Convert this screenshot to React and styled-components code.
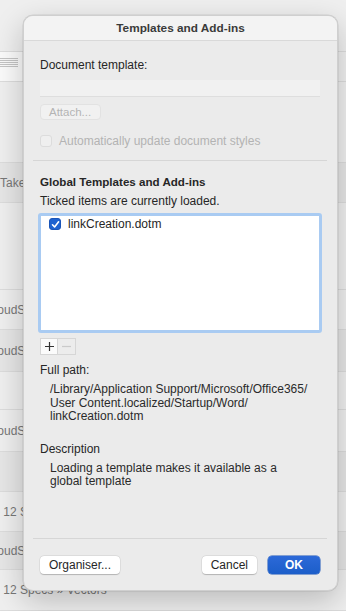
import React from 'react';
import styled, { createGlobalStyle } from 'styled-components';

const GlobalStyle = createGlobalStyle`
  html, body {
    margin: 0;
    padding: 0;
    background: #e8e8e8;
    font-family: "Liberation Sans", "Inter", sans-serif;
  }
`;

const Screen = styled.div`
  position: relative;
  width: 346px;
  height: 611px;
  overflow: hidden;
  background: #e9e9e9;
`;

// the app window behind the sheet
const BackList = styled.div`
  display: flex;
  flex-direction: column;
  width: 100%;
  height: 100%;
  background: #efefef;
`;

const BackRow = styled.div`
  display: flex;
  align-items: center;
  height: ${(p) => p.h}px;
  flex: none;
  box-sizing: border-box;
  border-bottom: 1px solid #dcdcdc;
  font-size: 12px;
  color: #777;
  white-space: nowrap;
  text-indent: ${(p) => p.indent || 0}px;
  background: ${(p) => (p.shade ? '#e6e6e6' : 'transparent')};
`;

const Thumb = styled.div`
  display: flex;
  flex-direction: column;
  gap: 1px;
  padding: 6px 4px 0 0;
  width: 22px;
  height: 100%;
  box-sizing: border-box;
  background: #fafafa;

  span {
    display: block;
    height: 1px;
    background: #c4c4c4;
  }
`;

const Dialog = styled.div`
  position: absolute;
  left: 23px;
  top: 15px;
  width: 315px;
  height: 576px;
  box-sizing: border-box;
  display: flex;
  flex-direction: column;
  background: #ebebeb;
  border: 1px solid #cfcfcf;
  border-radius: 10px;
  box-shadow: 0 10px 30px rgba(0, 0, 0, 0.22), 0 0 0 0.5px rgba(0, 0, 0, 0.1);
  overflow: hidden;
`;

const TitleBar = styled.div`
  height: 24px;
  flex: none;
  display: flex;
  align-items: center;
  justify-content: center;
  background: #f3f3f3;
  border-bottom: 1px solid #d9d9d9;
  font-size: 11.8px;
  font-weight: 700;
  color: #3a3a3a;
`;

const Body = styled.div`
  flex: 1;
  display: flex;
  flex-direction: column;
  padding: 0 17px 0 16px;
  color: #262626;
  font-size: 12px;
  white-space: nowrap;
`;

const Label = styled.div`
  line-height: 15px;
  margin-top: ${(p) => p.mt || 0}px;
  font-weight: ${(p) => (p.bold ? 700 : 400)};
  font-size: ${(p) => (p.bold ? 11.6 : 12)}px;
`;

const TextField = styled.div`
  margin-top: 7px;
  height: 16px;
  background: #f1f1f1;
  border-bottom: 1px solid #dedede;
`;

const SmallButton = styled.div`
  margin-top: 7px;
  width: 61px;
  height: 16px;
  box-sizing: border-box;
  display: flex;
  align-items: center;
  padding-left: 8px;
  border-radius: 4px;
  background: #f1f1f1;
  border: 1px solid #e2e2e2;
  color: #b4b4b4;
  font-size: 11.5px;
`;

const CheckRow = styled.div`
  margin-top: ${(p) => (p.flush ? 0 : 14)}px;
  display: flex;
  align-items: center;
  gap: 7px;
  color: ${(p) => (p.disabled ? '#b3b3b3' : '#262626')};
  line-height: 14px;
`;

const Box = styled.span`
  width: 12px;
  height: 12px;
  box-sizing: border-box;
  border-radius: 3px;
  flex: none;
  display: flex;
  align-items: center;
  justify-content: center;
  background: ${(p) => (p.checked ? '#1e62d0' : '#efefef')};
  border: 1px solid ${(p) => (p.checked ? '#1a55b8' : '#dcdcdc')};
`;

const Separator = styled.div`
  height: 1px;
  background: #d6d6d6;
  margin: ${(p) => p.m};
`;

const ListBox = styled.div`
  margin: 4px -2px 0 -2px;
  height: 120px;
  box-sizing: border-box;
  background: #fff;
  border: 3px solid #a9cbf2;
  border-radius: 3px;
  padding: 1px 8px;
`;

const Segmented = styled.div`
  margin-top: 5px;
  display: flex;
`;

const SegButton = styled.div`
  width: 18px;
  height: 17px;
  box-sizing: border-box;
  display: flex;
  align-items: center;
  justify-content: center;
  background: ${(p) => (p.disabled ? '#ececec' : '#fbfbfb')};
  border: 1px solid #d6d6d6;
  border-left-width: ${(p) => (p.disabled ? 0 : 1)}px;
`;

const Indented = styled.div`
  margin-top: ${(p) => p.mt}px;
  padding-left: 10px;
  line-height: 13.5px;
  color: #2a2a2a;
`;

const Footer = styled.div`
  display: flex;
  align-items: center;
  gap: 11px;
  margin-top: 17px;
`;

const PushButton = styled.div`
  height: 18px;
  box-sizing: border-box;
  padding: 0 9px;
  display: flex;
  align-items: center;
  justify-content: center;
  min-width: ${(p) => p.w || 0}px;
  border-radius: 4px;
  font-size: 12px;
  background: ${(p) => (p.primary ? 'linear-gradient(#2c69d8, #1c5ec9)' : '#fff')};
  color: ${(p) => (p.primary ? '#fff' : '#262626')};
  font-weight: ${(p) => (p.primary ? 700 : 400)};
  box-shadow: ${(p) =>
    p.primary ? '0 0 0 0.5px #1a55b8' : '0 0.5px 1px rgba(0,0,0,0.2), 0 0 0 0.5px rgba(0,0,0,0.08)'};
  margin-left: ${(p) => (p.push ? 'auto' : 0)};
`;

const Tick = () => (
  <svg width="9" height="9" viewBox="0 0 9 9">
    <path d="M1.5 4.8 L3.6 7 L7.6 1.8" fill="none" stroke="#fff" strokeWidth="1.6" strokeLinecap="round" strokeLinejoin="round" />
  </svg>
);

const Sign = ({ minus, color }) => (
  <svg width="11" height="11" viewBox="0 0 11 11">
    <path d={minus ? 'M1 5.5 H10' : 'M1 5.5 H10 M5.5 1 V10'} stroke={color} strokeWidth="1.2" />
  </svg>
);

const backRows = [
  { h: 52 },
  { h: 30, thumb: true },
  { h: 81 },
  { h: 40, text: 'Take', shade: true },
  { h: 87 },
  { h: 40, text: 'CloudStudio', indent: -14 },
  { h: 42, text: 'CloudStudio', indent: -14, shade: true },
  { h: 38 },
  { h: 42, text: 'CloudStudio', indent: -14 },
  { h: 40, shade: true },
  { h: 40, text: '- 12 Specs » Vectors', indent: -4 },
  { h: 38, text: 'CloudStudio', indent: -14, shade: true },
  { h: 41, text: '- 12 Specs » Vectors', indent: -4 },
];

const App = () => {
  return (
    <>
      <GlobalStyle />
      <Screen>
        <BackList>
          {backRows.map((r, i) => (
            <BackRow key={i} h={r.h} indent={r.indent} shade={r.shade}>
              {r.thumb ? (
                <Thumb>
                  <span />
                  <span />
                  <span />
                  <span />
                  <span />
                </Thumb>
              ) : (
                r.text
              )}
            </BackRow>
          ))}
        </BackList>

        <Dialog>
          <TitleBar>Templates and Add-ins</TitleBar>
          <Body>
            <Label mt={17}>Document template:</Label>
            <TextField />
            <SmallButton>Attach...</SmallButton>
            <CheckRow disabled>
              <Box />
              Automatically update document styles
            </CheckRow>
            <Separator m="12px -7px 0 -7px" />
            <Label bold mt={13}>Global Templates and Add-ins</Label>
            <Label mt={5}>Ticked items are currently loaded.</Label>
            <ListBox>
              <CheckRow flush>
                <Box checked>
                  <Tick />
                </Box>
                linkCreation.dotm
              </CheckRow>
            </ListBox>
            <Segmented>
              <SegButton>
                <Sign color="#333" />
              </SegButton>
              <SegButton disabled>
                <Sign minus color="#cacaca" />
              </SegButton>
            </Segmented>
            <Label mt={8}>Full path:</Label>
            <Indented mt={5}>
              /Library/Application Support/Microsoft/Office365/
              <br />
              User Content.localized/Startup/Word/
              <br />
              linkCreation.dotm
            </Indented>
            <Label mt={18}>Description</Label>
            <Indented mt={5}>
              Loading a template makes it available as a
              <br />
              global template
            </Indented>
            <Separator m="auto -7px 0 -7px" />
            <Footer>
              <PushButton w={77}>Organiser...</PushButton>
              <PushButton push w={53}>Cancel</PushButton>
              <PushButton primary w={52}>OK</PushButton>
            </Footer>
            <div style={{ height: 16 }} />
          </Body>
        </Dialog>
      </Screen>
    </>
  );
};

export default App;
